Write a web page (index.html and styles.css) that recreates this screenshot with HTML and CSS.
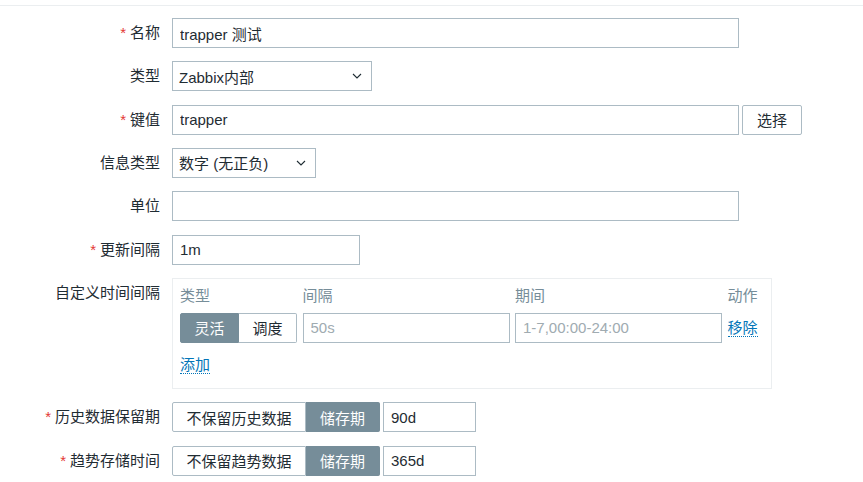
FILE: index.html
```html
<!DOCTYPE html>
<html lang="zh-CN">
<head>
<meta charset="utf-8">
<title>监控项</title>
<link rel="stylesheet" href="styles.css">
</head>
<body>
<div class="topbar"></div>
<div class="form">
  <div class="label"><span class="req">*</span>名称</div>
  <div class="field"><input class="input w-wide" value="trapper 测试"></div>

  <div class="label">类型</div>
  <div class="field">
    <div class="select w-type"><span>Zabbix内部</span><svg class="chev" width="10" height="6" viewBox="0 0 10 6"><path d="M1 1l4 4 4-4" fill="none" stroke="#1f2c33" stroke-width="1.1"/></svg></div>
  </div>

  <div class="label"><span class="req">*</span>键值</div>
  <div class="field row">
    <input class="input w-wide" value="trapper">
    <div class="btn">选择</div>
  </div>

  <div class="label">信息类型</div>
  <div class="field">
    <div class="select w-info"><span>数字 (无正负)</span><svg class="chev" width="10" height="6" viewBox="0 0 10 6"><path d="M1 1l4 4 4-4" fill="none" stroke="#1f2c33" stroke-width="1.1"/></svg></div>
  </div>

  <div class="label">单位</div>
  <div class="field"><input class="input w-wide" value=""></div>

  <div class="label"><span class="req">*</span>更新间隔</div>
  <div class="field"><input class="input w-delay" value="1m"></div>

  <div class="label">自定义时间间隔</div>
  <div class="field">
    <div class="intervals">
      <div class="iv-grid">
        <div class="iv-head">类型</div>
        <div class="iv-head">间隔</div>
        <div class="iv-head">期间</div>
        <div class="iv-head">动作</div>
        <div class="seg">
          <span class="seg-item sel w-flex">灵活</span>
          <span class="seg-item w-sched">调度</span>
        </div>
        <input class="input ph" placeholder="50s">
        <input class="input ph" placeholder="1-7,00:00-24:00">
        <div class="iv-action"><span class="link">移除</span></div>
      </div>
      <div class="iv-add"><span class="link">添加</span></div>
    </div>
  </div>

  <div class="label"><span class="req">*</span>历史数据保留期</div>
  <div class="field row">
    <div class="seg">
      <span class="seg-item w-nokeep">不保留历史数据</span>
      <span class="seg-item sel w-store">储存期</span>
    </div>
    <input class="input w-period" value="90d">
  </div>

  <div class="label"><span class="req">*</span>趋势存储时间</div>
  <div class="field row">
    <div class="seg">
      <span class="seg-item w-nokeep">不保留趋势数据</span>
      <span class="seg-item sel w-store">储存期</span>
    </div>
    <input class="input w-period" value="365d">
  </div>
</div>
</body>
</html>
```

FILE: styles.css
```css
html, body {
  margin: 0;
  padding: 0;
  background: #ffffff;
}

body {
  font-family: "Liberation Sans", "Noto Sans CJK SC", sans-serif;
  font-size: 15px;
  color: #1f2c33;
}

.topbar {
  height: 5px;
  border-bottom: 1px solid #ebeef0;
}

.form {
  display: grid;
  grid-template-columns: 160px 1fr;
  column-gap: 12px;
  row-gap: 13.33px;
  margin-top: 12px;
  align-items: start;
}

.label {
  text-align: right;
  line-height: 30px;
  height: 30px;
  white-space: nowrap;
}

.req {
  color: #e33734;
  margin-right: 4px;
}

.field {
  display: block;
}

.row {
  display: flex;
  gap: 3px;
}

.input {
  box-sizing: border-box;
  height: 30px;
  border: 1px solid #acbbc4;
  padding: 0 7px;
  margin: 0;
  font: inherit;
  color: #1f2c33;
  background: #ffffff;
  outline: none;
  border-radius: 0;
  display: block;
  width: 100%;
}

.input::placeholder {
  color: #a0abb1;
}

.w-wide { width: 567px; }
.w-delay { width: 188px; }
.w-period { width: 93px; }

.select {
  box-sizing: border-box;
  height: 30px;
  border: 1px solid #acbbc4;
  padding: 0 9px 0 6px;
  display: flex;
  align-items: center;
  justify-content: space-between;
  background: #ffffff;
}

.w-type { width: 200px; }
.w-info { width: 144px; }

.chev {
  display: block;
}

.btn {
  box-sizing: border-box;
  height: 30px;
  width: 60px;
  border: 1px solid #acbbc4;
  border-radius: 2px;
  display: flex;
  align-items: center;
  justify-content: center;
  background: #ffffff;
}

.intervals {
  box-sizing: border-box;
  width: 600px;
  border: 1px solid #ebeef0;
  padding: 7px 7px 12px 7px;
}

.iv-grid {
  display: grid;
  grid-template-columns: 117px 207px 207px auto;
  column-gap: 5.5px;
  row-gap: 7px;
  align-items: center;
}

.iv-head {
  line-height: 20px;
  color: #768d99;
}

.iv-action {
  line-height: 30px;
}

.iv-add {
  margin-top: 11px;
  line-height: 22px;
}

.link {
  color: #0275b8;
  border-bottom: 1px dotted #0275b8;
}

.seg {
  display: flex;
  height: 30px;
}

.seg-item {
  box-sizing: border-box;
  height: 30px;
  display: flex;
  align-items: center;
  justify-content: center;
  border: 1px solid #acbbc4;
  background: #ffffff;
  color: #1f2c33;
  white-space: nowrap;
}

.seg-item:first-child {
  border-radius: 2px 0 0 2px;
}

.seg-item:last-child {
  border-left: none;
  border-radius: 0 2px 2px 0;
}

.seg-item.sel {
  background: #768d99;
  border-color: #768d99;
  color: #ffffff;
}

.w-flex { width: 59px; }
.w-sched { width: 58px; }
.w-nokeep { width: 134px; }
.w-store { width: 74px; }
```
